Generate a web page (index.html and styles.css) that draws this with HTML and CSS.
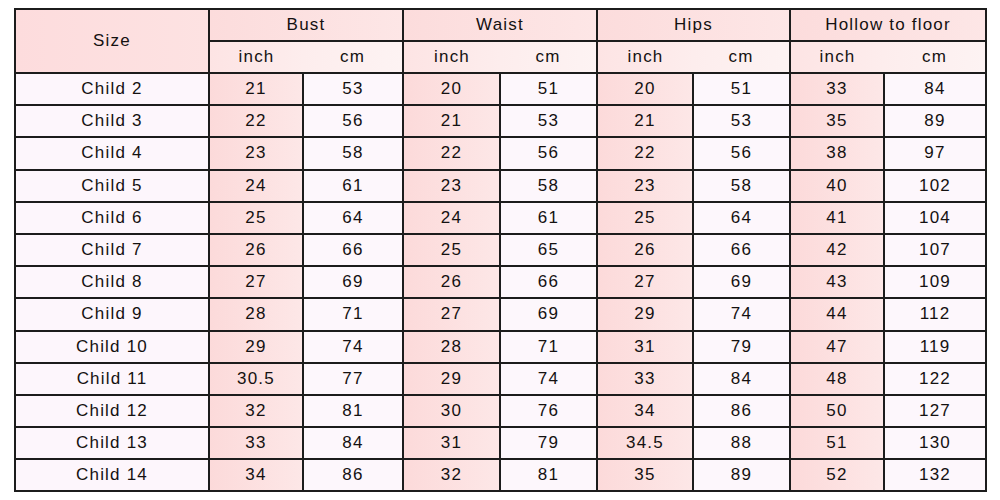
FILE: index.html
```html
<!DOCTYPE html>
<html>
<head>
<meta charset="utf-8">
<link rel="stylesheet" href="styles.css">
</head>
<body>
<table class="chart">
  <colgroup>
    <col class="c-size"><col class="c-1"><col class="c-2"><col class="c-3"><col class="c-4"><col class="c-5"><col class="c-6"><col class="c-7"><col class="c-8">
  </colgroup>
  <thead>
    <tr class="h1">
      <th rowspan="2" class="size-h">Size</th>
      <th colspan="2">Bust</th>
      <th colspan="2">Waist</th>
      <th colspan="2">Hips</th>
      <th colspan="2">Hollow to floor</th>
    </tr>
    <tr class="h2">
      <th class="ui">inch</th><th class="uc">cm</th>
      <th class="ui">inch</th><th class="uc">cm</th>
      <th class="ui">inch</th><th class="uc">cm</th>
      <th class="ui">inch</th><th class="uc">cm</th>
    </tr>
  </thead>
  <tbody>
    <tr><td class="sz">Child 2</td><td class="in">21</td><td class="cm">53</td><td class="in">20</td><td class="cm">51</td><td class="in">20</td><td class="cm">51</td><td class="in">33</td><td class="cm">84</td></tr>
    <tr><td class="sz">Child 3</td><td class="in">22</td><td class="cm">56</td><td class="in">21</td><td class="cm">53</td><td class="in">21</td><td class="cm">53</td><td class="in">35</td><td class="cm">89</td></tr>
    <tr><td class="sz">Child 4</td><td class="in">23</td><td class="cm">58</td><td class="in">22</td><td class="cm">56</td><td class="in">22</td><td class="cm">56</td><td class="in">38</td><td class="cm">97</td></tr>
    <tr><td class="sz">Child 5</td><td class="in">24</td><td class="cm">61</td><td class="in">23</td><td class="cm">58</td><td class="in">23</td><td class="cm">58</td><td class="in">40</td><td class="cm">102</td></tr>
    <tr><td class="sz">Child 6</td><td class="in">25</td><td class="cm">64</td><td class="in">24</td><td class="cm">61</td><td class="in">25</td><td class="cm">64</td><td class="in">41</td><td class="cm">104</td></tr>
    <tr><td class="sz">Child 7</td><td class="in">26</td><td class="cm">66</td><td class="in">25</td><td class="cm">65</td><td class="in">26</td><td class="cm">66</td><td class="in">42</td><td class="cm">107</td></tr>
    <tr><td class="sz">Child 8</td><td class="in">27</td><td class="cm">69</td><td class="in">26</td><td class="cm">66</td><td class="in">27</td><td class="cm">69</td><td class="in">43</td><td class="cm">109</td></tr>
    <tr><td class="sz">Child 9</td><td class="in">28</td><td class="cm">71</td><td class="in">27</td><td class="cm">69</td><td class="in">29</td><td class="cm">74</td><td class="in">44</td><td class="cm">112</td></tr>
    <tr><td class="sz">Child 10</td><td class="in">29</td><td class="cm">74</td><td class="in">28</td><td class="cm">71</td><td class="in">31</td><td class="cm">79</td><td class="in">47</td><td class="cm">119</td></tr>
    <tr><td class="sz">Child 11</td><td class="in">30.5</td><td class="cm">77</td><td class="in">29</td><td class="cm">74</td><td class="in">33</td><td class="cm">84</td><td class="in">48</td><td class="cm">122</td></tr>
    <tr><td class="sz">Child 12</td><td class="in">32</td><td class="cm">81</td><td class="in">30</td><td class="cm">76</td><td class="in">34</td><td class="cm">86</td><td class="in">50</td><td class="cm">127</td></tr>
    <tr><td class="sz">Child 13</td><td class="in">33</td><td class="cm">84</td><td class="in">31</td><td class="cm">79</td><td class="in">34.5</td><td class="cm">88</td><td class="in">51</td><td class="cm">130</td></tr>
    <tr><td class="sz">Child 14</td><td class="in">34</td><td class="cm">86</td><td class="in">32</td><td class="cm">81</td><td class="in">35</td><td class="cm">89</td><td class="in">52</td><td class="cm">132</td></tr>
  </tbody>
</table>
</body>
</html>
```
FILE: styles.css
```css
html, body {
  margin: 0;
  padding: 0;
  background: #ffffff;
}

body {
  padding: 8px 0 0 14px;
}

.chart {
  border-collapse: collapse;
  table-layout: fixed;
  width: 971px;
  font-family: "Liberation Sans", Arial, sans-serif;
  font-size: 17px;
  letter-spacing: 1.2px;
  color: #141111;
  border: 2px solid #1c1c1c;
}

.c-size { width: 194px; }
.c-1 { width: 94px; }
.c-2 { width: 100px; }
.c-3 { width: 97px; }
.c-4 { width: 97px; }
.c-5 { width: 96px; }
.c-6 { width: 97px; }
.c-7 { width: 94px; }
.c-8 { width: 102px; }

.chart th,
.chart td {
  border: 2px solid #1c1c1c;
  padding: 0;
  text-align: center;
  vertical-align: middle;
  font-weight: normal;
  height: 30px;
}

.chart tbody td {
  height: 30.2px;
}

.h1 th {
  background: linear-gradient(90deg, #fcdcdc 0%, #fde6e6 100%);
}

.size-h {
  background: linear-gradient(90deg, #fddcdd 0%, #fde2e2 100%) !important;
}

.h2 th {
  background: linear-gradient(90deg, #fde6e6 0%, #fdf0f0 100%);
}

.h2 .ui {
  border-right: none;
  background: linear-gradient(90deg, #fde4e4 0%, #fdeded 100%);
}

.h2 .uc {
  border-left: none;
  background: linear-gradient(90deg, #fdeded 0%, #fdf3f3 100%);
}

.sz {
  background: #fdf6fc;
}

.in {
  background: linear-gradient(90deg, #fcdada 0%, #fde7e7 100%);
}

.cm {
  background: #fdf7fc;
}
```
